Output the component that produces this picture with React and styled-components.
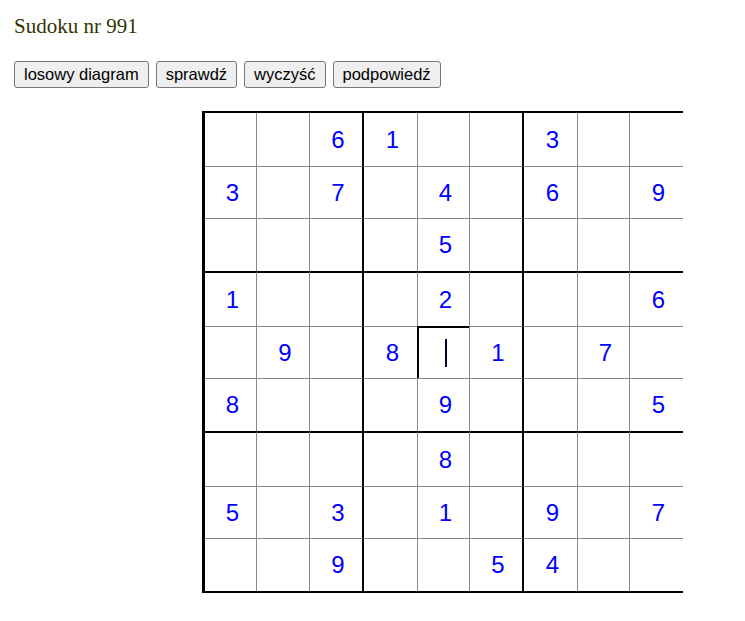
import React from 'react';
import styled, { createGlobalStyle } from 'styled-components';

const GlobalStyle = createGlobalStyle`
  body {
    margin: 0;
    background: #fff;
  }
`;

// column / row sizes (left or top border included), measured from the board
const COLS = [51, 53, 53, 55, 52, 53, 55, 52, 54];
const ROWS = [53, 52, 53, 55, 52, 53, 55, 52, 53];

const PUZZLE = [
  '  61  3  ',
  '3 7 4 6 9',
  '    5    ',
  '1   2   6',
  ' 9 8 1 7 ',
  '8   9   5',
  '    8    ',
  '5 3 1 9 7',
  '  9  54  ',
];

const FOCUS = { row: 4, col: 4 };

const Page = styled.div`
  padding: 14px 14px 0;
  font-family: 'Liberation Sans', Arial, sans-serif;
`;

const Title = styled.h1`
  margin: 0;
  font-family: 'Liberation Serif', 'Times New Roman', serif;
  font-weight: normal;
  font-size: 21px;
  line-height: 24px;
  color: #333300;
`;

const Toolbar = styled.div`
  display: flex;
  gap: 7px;
  margin-top: 23px;
`;

const Button = styled.button`
  height: 27px;
  padding: 0 9px;
  border: 1px solid #767676;
  border-radius: 3px;
  background: #efefef;
  color: #000;
  font-family: 'Liberation Sans', Arial, sans-serif;
  font-size: 16.5px;
  line-height: 25px;
  cursor: pointer;
`;

const BoardWrap = styled.div`
  padding: 23px 0 0 188px;
`;

const Board = styled.div`
  display: grid;
  grid-template-columns: ${COLS.map((w) => `${w}px`).join(' ')};
  grid-template-rows: ${ROWS.map((h) => `${h}px`).join(' ')};
  width: max-content;
  border-left: 3px solid #000;
  border-top: 2px solid #000;
  border-bottom: 2px solid #000;
`;

const lineFor = (index, focused) => {
  if (index === 0) return 'none';
  if (focused || index % 3 === 0) return '2px solid #000';
  return '1px solid #888';
};

const Cell = styled.div`
  box-sizing: border-box;
  display: flex;
  align-items: center;
  justify-content: center;
  padding-left: 4px;
  border-left: ${(p) => lineFor(p.$col, p.$focused)};
  border-top: ${(p) => lineFor(p.$row, p.$focused)};
  color: #0000ff;
  font-size: 24px;
  line-height: 1;
`;

const Caret = styled.span`
  display: block;
  width: 2px;
  height: 28px;
  background: #000033;
`;

const App = () => {
  return (
    <Page>
      <GlobalStyle />
      <Title>Sudoku nr 991</Title>
      <Toolbar>
        <Button>losowy diagram</Button>
        <Button>sprawdź</Button>
        <Button>wyczyść</Button>
        <Button>podpowiedź</Button>
      </Toolbar>
      <BoardWrap>
        <Board>
          {PUZZLE.map((line, r) =>
            line.split('').map((ch, c) => {
              const focused = r === FOCUS.row && c === FOCUS.col;
              return (
                <Cell key={`${r}-${c}`} $row={r} $col={c} $focused={focused}>
                  {focused ? <Caret /> : ch.trim()}
                </Cell>
              );
            })
          )}
        </Board>
      </BoardWrap>
    </Page>
  );
};

export default App;
